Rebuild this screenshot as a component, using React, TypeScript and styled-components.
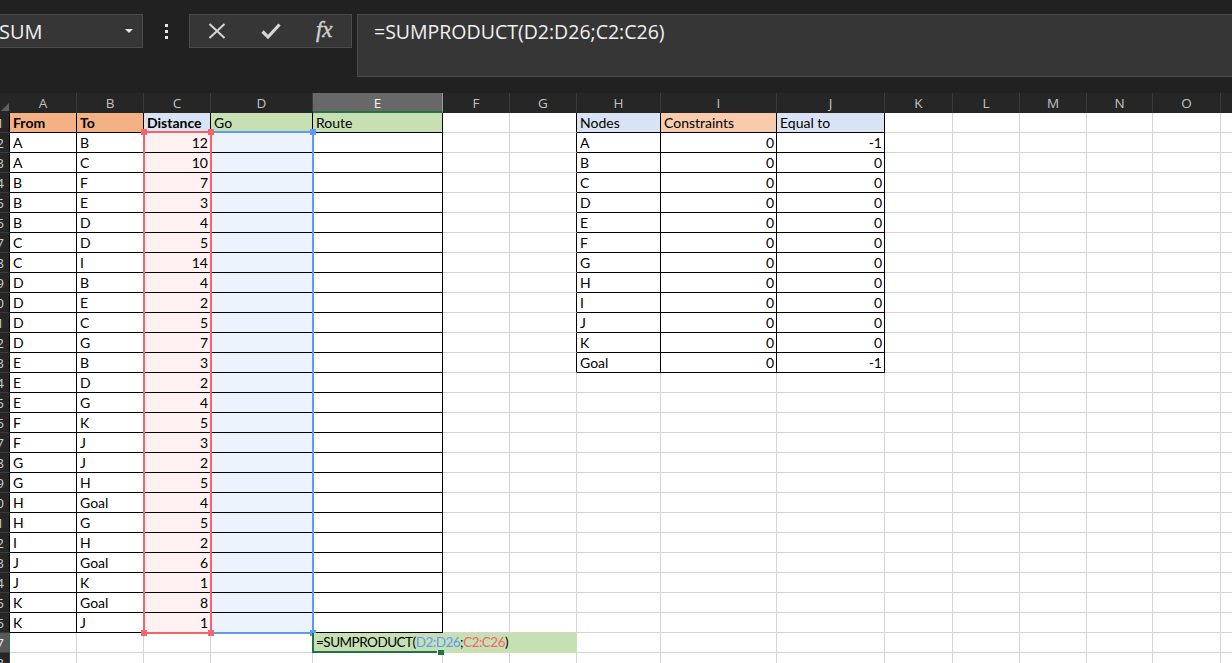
import styled, { createGlobalStyle } from "styled-components";

const GlobalStyle = createGlobalStyle`
  html, body {
    margin: 0;
    padding: 0;
    background: #212121;
    overflow: hidden;
  }
  * {
    box-sizing: border-box;
  }
`;

const COLS = ["A", "B", "C", "D", "E", "F", "G", "H", "I", "J", "K", "L", "M", "N", "O", "P"];
const WIDTHS = [67, 67, 67, 102, 130, 67, 67, 84, 116, 108, 68, 67, 67, 66, 68, 67];
const ROW_HEAD = 10;
const HEAD_H = 20;
const ROW_H = 20;
const ROWS = 28;

const ORANGE = "#f4b183";
const PEACH = "#f8cbad";
const BLUE_HEAD = "#dae3f3";
const GREEN_HEAD = "#c6e0b4";
const RED = "#f4646e";
const BLUE = "#5b9bf5";
const RED_TINT = "#fff0f1";
const BLUE_TINT = "#edf3fd";
const EXCEL_GREEN = "#217346";

const colX = (i: number) => ROW_HEAD + WIDTHS.slice(0, i).reduce((a, b) => a + b, 0);
const rowY = (r: number) => HEAD_H + (r - 1) * ROW_H;

const routes: [string, string, number][] = [
  ["A", "B", 12],
  ["A", "C", 10],
  ["B", "F", 7],
  ["B", "E", 3],
  ["B", "D", 4],
  ["C", "D", 5],
  ["C", "I", 14],
  ["D", "B", 4],
  ["D", "E", 2],
  ["D", "C", 5],
  ["D", "G", 7],
  ["E", "B", 3],
  ["E", "D", 2],
  ["E", "G", 4],
  ["F", "K", 5],
  ["F", "J", 3],
  ["G", "J", 2],
  ["G", "H", 5],
  ["H", "Goal", 4],
  ["H", "G", 5],
  ["I", "H", 2],
  ["J", "Goal", 6],
  ["J", "K", 1],
  ["K", "Goal", 8],
  ["K", "J", 1],
];

const nodes = ["A", "B", "C", "D", "E", "F", "G", "H", "I", "J", "K", "Goal"];

type CellSpec = { v?: string; bold?: boolean; fill?: string; right?: boolean };

const sheet: Record<string, CellSpec> = {};
const put = (c: number, r: number, spec: CellSpec) => {
  sheet[`${c}:${r}`] = { ...sheet[`${c}:${r}`], ...spec };
};

put(0, 1, { v: "From", bold: true, fill: ORANGE });
put(1, 1, { v: "To", bold: true, fill: ORANGE });
put(2, 1, { v: "Distance", bold: true, fill: BLUE_HEAD });
put(3, 1, { v: "Go", fill: GREEN_HEAD });
put(4, 1, { v: "Route", fill: GREEN_HEAD });
routes.forEach(([from, to, d], i) => {
  const r = i + 2;
  put(0, r, { v: from });
  put(1, r, { v: to });
  put(2, r, { v: String(d), right: true, fill: RED_TINT });
  put(3, r, { fill: BLUE_TINT });
});

put(7, 1, { v: "Nodes", fill: BLUE_HEAD });
put(8, 1, { v: "Constraints", fill: PEACH });
put(9, 1, { v: "Equal to", fill: BLUE_HEAD });
nodes.forEach((n, i) => {
  const r = i + 2;
  const end = n === "A" || n === "Goal";
  put(7, r, { v: n });
  put(8, r, { v: "0", right: true });
  put(9, r, { v: end ? "-1" : "0", right: true });
});

const inTable = (c: number, r: number) =>
  (c >= 0 && c <= 4 && r >= 1 && r <= 26) || (c >= 7 && c <= 9 && r >= 1 && r <= 13);

const Window = styled.div`
  width: 1232px;
  height: 663px;
  display: flex;
  flex-direction: column;
  overflow: hidden;
  background: #212121;
`;

const TopBar = styled.div`
  height: 93px;
  flex: none;
  display: flex;
  align-items: flex-start;
  padding-top: 14px;
  font-family: "Open Sans", "Noto Sans", sans-serif;
  color: #f0f0f0;
`;

const NameBox = styled.div`
  width: 143px;
  height: 34px;
  display: flex;
  align-items: center;
  justify-content: space-between;
  padding-right: 9px;
  background: #363636;
  border: 1px solid #4a4a4a;
  border-left: none;
  font-size: 20px;
`;

const NameText = styled.span`
  margin-left: -1px;
`;

const Caret = styled.span`
  width: 0;
  height: 0;
  border-left: 4px solid transparent;
  border-right: 4px solid transparent;
  border-top: 4px solid #e6e6e6;
`;

const Dots = styled.div`
  width: 46px;
  height: 34px;
  display: flex;
  flex-direction: column;
  align-items: center;
  justify-content: center;
  gap: 3px;
`;

const Dot = styled.span`
  width: 3px;
  height: 3px;
  background: #e6e6e6;
`;

const ButtonGroup = styled.div`
  width: 163px;
  height: 34px;
  display: flex;
  background: #363636;
  border: 1px solid #4a4a4a;
`;

const IconButton = styled.button`
  width: 54px;
  height: 100%;
  padding: 0;
  border: none;
  background: transparent;
  display: flex;
  align-items: center;
  justify-content: center;
  color: #d6d6d6;
`;

const Fx = styled.span`
  font: italic 400 23px "Liberation Serif", "DejaVu Serif", serif;
  color: #cfcfcf;
  margin-top: -3px;
  -webkit-text-stroke: 0.4px #cfcfcf;
`;

const FormulaBox = styled.div`
  flex: 1;
  height: 63px;
  margin-left: 5px;
  padding: 3px 16px;
  background: #363636;
  border: 1px solid #4a4a4a;
  border-right: none;
  font-size: 19.5px;
  line-height: 28px;
  white-space: nowrap;
`;

const SheetArea = styled.div`
  position: relative;
  flex: 1;
  overflow: hidden;
  background: #ffffff;
`;

const Grid = styled.div`
  display: grid;
  grid-template-columns: ${ROW_HEAD}px ${WIDTHS.map((w) => `${w}px`).join(" ")};
  grid-template-rows: ${HEAD_H}px repeat(${ROWS}, ${ROW_H}px);
  width: max-content;
`;

const Corner = styled.div`
  background: #262626;
  display: flex;
  align-items: flex-end;
  justify-content: flex-end;
  padding: 0 1px 2px 0;
`;

const ColHead = styled.div<{ $active?: boolean }>`
  display: flex;
  align-items: center;
  justify-content: center;
  background: ${(p) => (p.$active ? "#686868" : "#262626")};
  color: ${(p) => (p.$active ? "#f2f2f2" : "#c2c2c2")};
  border-right: 1px solid ${(p) => (p.$active ? "#9a9a9a" : "#3c3c3c")};
  border-bottom: 2px solid ${(p) => (p.$active ? EXCEL_GREEN : "#262626")};
  font: 400 13.5px "Open Sans", "Noto Sans", sans-serif;
  padding-top: 1px;
`;

const RowHead = styled.div<{ $active?: boolean; $edge: string }>`
  display: flex;
  align-items: center;
  justify-content: flex-end;
  overflow: hidden;
  padding-right: 5px;
  background: ${(p) => (p.$active ? "#585858" : "#262626")};
  color: ${(p) => (p.$active ? "#f2f2f2" : "#cfcfcf")};
  border-bottom: 1px solid #3a3a3a;
  border-right: 1px solid ${(p) => (p.$active ? EXCEL_GREEN : p.$edge)};
  font: 400 13.5px "Open Sans", "Noto Sans", sans-serif;
`;

const RowNumber = styled.span`
  flex: none;
`;

const Cell = styled.div<{
  $fill: string;
  $edgeR: string;
  $edgeB: string;
  $right: boolean;
  $bold: boolean;
}>`
  background: ${(p) => p.$fill};
  border-right: 1px solid ${(p) => p.$edgeR};
  border-bottom: 1px solid ${(p) => p.$edgeB};
  padding: 0 2px 0 3px;
  text-align: ${(p) => (p.$right ? "right" : "left")};
  font: ${(p) => (p.$bold ? 700 : 400)} 14px "Lato", "Liberation Sans", sans-serif;
  line-height: 19px;
  color: #000;
  white-space: nowrap;
  overflow: hidden;
`;

const RangeBox = styled.div<{ $color: string }>`
  position: absolute;
  border: 2px solid ${(p) => p.$color};
  pointer-events: none;
`;

const Handle = styled.span<{ $color: string; $h: "left" | "right"; $v: "top" | "bottom" }>`
  position: absolute;
  width: 6px;
  height: 6px;
  background: ${(p) => p.$color};
  ${(p) => p.$h}: -4px;
  ${(p) => p.$v}: -4px;
`;

const Editor = styled.div`
  position: absolute;
  height: ${ROW_H}px;
  background: ${GREEN_HEAD};
  border-left: 2px solid ${EXCEL_GREEN};
  padding-left: 2px;
  font: 400 13.5px "Lato", "Liberation Sans", sans-serif;
  letter-spacing: -0.5px;
  line-height: 19px;
  color: #000;
  white-space: nowrap;
`;

const ActiveEdge = styled.span`
  position: absolute;
  left: -2px;
  bottom: 0;
  width: ${WIDTHS[4] - 4}px;
  height: 2px;
  background: ${EXCEL_GREEN};
`;

const FillHandle = styled.span`
  position: absolute;
  left: ${WIDTHS[4] - 7}px;
  bottom: -2px;
  width: 7px;
  height: 5px;
  background: ${EXCEL_GREEN};
  border-left: 1px solid #fff;
`;

const Ref = styled.span<{ $color: string }>`
  color: ${(p) => p.$color};
`;

function Range({ col, color }: { col: number; color: string }) {
  const left = colX(col) - 1;
  const top = rowY(2) - 2;
  const style = {
    left,
    top,
    width: WIDTHS[col] + 2,
    height: rowY(27) + 1 - top,
  };
  return (
    <RangeBox $color={color} style={style}>
      <Handle $color={color} $h="left" $v="top" />
      <Handle $color={color} $h="right" $v="top" />
      <Handle $color={color} $h="left" $v="bottom" />
      <Handle $color={color} $h="right" $v="bottom" />
    </RangeBox>
  );
}

function Formula() {
  return (
    <>
      =SUMPRODUCT(<Ref $color={BLUE}>D2:D26</Ref>;<Ref $color={RED}>C2:C26</Ref>)
    </>
  );
}

function Row({ r }: { r: number }) {
  return (
    <>
      <RowHead $active={r === 27} $edge={inTable(0, r) ? "#000" : "#3a3a3a"}>
        <RowNumber>{r}</RowNumber>
      </RowHead>
      {COLS.map((_, c) => {
        const spec = sheet[`${c}:${r}`] || {};
        const edgeR = inTable(c, r) || inTable(c + 1, r) ? "#000" : "#d4d4d4";
        const edgeB = inTable(c, r) || inTable(c, r + 1) ? "#000" : "#d4d4d4";
        return (
          <Cell
            key={c}
            $fill={spec.fill || "#fff"}
            $edgeR={edgeR}
            $edgeB={edgeB}
            $right={!!spec.right}
            $bold={!!spec.bold}
          >
            {spec.v}
          </Cell>
        );
      })}
    </>
  );
}

function App() {
  const rows = Array.from({ length: ROWS }, (_, i) => i + 1);
  return (
    <Window>
      <GlobalStyle />
      <TopBar>
        <NameBox>
          <NameText>SUM</NameText>
          <Caret />
        </NameBox>
        <Dots>
          <Dot />
          <Dot />
          <Dot />
        </Dots>
        <ButtonGroup>
          <IconButton aria-label="Cancel">
            <svg width="18" height="16" viewBox="0 0 18 16">
              <path d="M1.5 1 L16.5 15 M16.5 1 L1.5 15" stroke="currentColor" strokeWidth="2" fill="none" />
            </svg>
          </IconButton>
          <IconButton aria-label="Enter">
            <svg width="20" height="16" viewBox="0 0 20 16">
              <path d="M1.5 8.5 L7 14 L18.5 1.5" stroke="currentColor" strokeWidth="3.2" fill="none" />
            </svg>
          </IconButton>
          <IconButton aria-label="Insert function">
            <Fx>fx</Fx>
          </IconButton>
        </ButtonGroup>
        <FormulaBox>=SUMPRODUCT(D2:D26;C2:C26)</FormulaBox>
      </TopBar>

      <SheetArea>
        <Grid>
          <Corner>
            <svg width="8" height="8" viewBox="0 0 8 8">
              <path d="M8 0 L8 8 L0 8 Z" fill="#5e5e5e" />
            </svg>
          </Corner>
          {COLS.map((c, i) => (
            <ColHead key={c} $active={i === 4}>
              {c}
            </ColHead>
          ))}
          {rows.map((r) => (
            <Row key={r} r={r} />
          ))}
        </Grid>

        <Range col={3} color={BLUE} />
        <Range col={2} color={RED} />

        <Editor
          style={{
            left: colX(4) - 1,
            top: rowY(27),
            width: colX(7) - colX(4) + 1,
          }}
        >
          <Formula />
          <ActiveEdge />
          <FillHandle />
        </Editor>
      </SheetArea>
    </Window>
  );
}

export default App;
